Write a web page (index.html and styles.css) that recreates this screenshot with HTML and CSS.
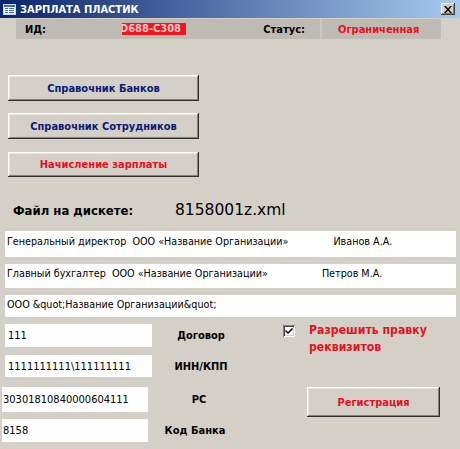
FILE: index.html
```html
<!DOCTYPE html>
<html lang="ru">
<head>
<meta charset="utf-8">
<title>ЗАРПЛАТА ПЛАСТИК</title>
<link rel="stylesheet" href="styles.css">
</head>
<body>
<div class="window">
  <div class="titlebar">
    <svg class="appicon" width="13" height="11" viewBox="0 0 13 11">
      <rect x="0.5" y="0.5" width="12" height="10" fill="#ffffff" stroke="#c8d4f0"/>
      <rect x="1" y="1" width="11" height="2" fill="#3a6ad0"/>
      <rect x="2" y="4" width="3" height="1" fill="#3a6ad0"/>
      <rect x="6" y="4" width="5" height="1" fill="#3a6ad0"/>
      <rect x="2" y="6" width="3" height="1" fill="#3a6ad0"/>
      <rect x="6" y="6" width="5" height="1" fill="#3a6ad0"/>
      <rect x="2" y="8" width="3" height="1" fill="#3a6ad0"/>
      <rect x="6" y="8" width="5" height="1" fill="#3a6ad0"/>
    </svg>
    <span class="title">ЗАРПЛАТА ПЛАСТИК</span>
    <span class="closebtn">
      <svg width="8" height="7" viewBox="0 0 8 7"><path d="M0 0h2l2 2.5L6 0h2L5 3.5 8 7H6L4 4.5 2 7H0l3-3.5z" fill="#000"/></svg>
    </span>
  </div>

  <div class="strip">
    <span class="cell-id">ИД:</span>
    <span class="cell-idval"><span>D688-C308</span></span>
    <span class="cell-status">Статус:</span>
    <span class="cell-sep"></span>
    <span class="cell-statusval">Ограниченная</span>
  </div>

  <div class="buttons">
    <div class="btn btn-navy btn-main">Справочник Банков</div>
    <div class="btn btn-navy btn-main">Справочник Сотрудников</div>
    <div class="btn btn-red btn-main">Начисление зарплаты</div>
  </div>

  <div class="filerow">
    <span class="filelabel">Файл на дискете:</span>
    <span class="filename">8158001z.xml</span>
  </div>

  <div class="field wide f1"><span class="w-left">Генеральный директор&nbsp; ООО «Название Организации»</span><span class="w-right r1">Иванов А.А.</span></div>
  <div class="field wide f2"><span class="w-left">Главный бухгалтер&nbsp; ООО «Название Организации»</span><span class="w-right r2">Петров М.А.</span></div>
  <div class="field wide f3">ООО &amp;quot;Название Организации&amp;quot;</div>

  <div class="lower">
    <div class="rows">
      <div class="row r-a"><div class="field small">111</div><span class="lbl">Договор</span></div>
      <div class="row r-b"><div class="field small">1111111111\111111111</div><span class="lbl">ИНН/КПП</span></div>
      <div class="row r-c"><div class="field small s2">30301810840000604111</div><span class="lbl lbl-rs">РС</span></div>
      <div class="row r-d"><div class="field small s2">8158</div><span class="lbl lbl-kod">Код Банка</span></div>
    </div>
    <div class="side">
      <div class="check">
        <span class="box"><svg width="8" height="7" viewBox="0 0 8 7"><path d="M0 3l1-1 2 2 4-4 1 1-5 5z" fill="#000"/></svg></span>
        <span class="checklabel">Разрешить правку реквизитов</span>
      </div>
      <div class="btn btn-red btn-reg">Регистрация</div>
    </div>
  </div>
</div>
</body>
</html>
```

FILE: styles.css
```css
html, body {
  margin: 0;
  padding: 0;
}
body {
  background: #d4d0c8;
  font-family: Tahoma, "DejaVu Sans Condensed", "Liberation Sans", sans-serif;
  font-size: 11px;
  color: #000;
}
.window {
  width: 460px;
  height: 449px;
  overflow: hidden;
}
.titlebar {
  height: 18px;
  display: flex;
  align-items: center;
  background: linear-gradient(to right, #0a246a, #a6caf0);
  color: #fff;
  position: relative;
}
.appicon {
  margin-left: 3px;
  flex: none;
}
.title {
  margin-left: 4px;
  font-weight: bold;
  font-size: 11px;
  font-family: "DejaVu Sans Condensed", "Liberation Sans", sans-serif;
  letter-spacing: 0;
}
.closebtn {
  margin-left: auto;
  margin-right: 5px;
  width: 14px;
  height: 12px;
  background: #d4d0c8;
  box-shadow: inset -1px -1px #404040, inset 1px 1px #ffffff, inset -2px -2px #808080;
  display: flex;
  align-items: center;
  justify-content: center;
}
.strip {
  margin: 1px 0 0 16px;
  width: 425px;
  height: 20px;
  background: #bebbb4;
  display: flex;
  align-items: center;
  font-weight: bold;
  font-family: "DejaVu Sans Condensed", "Liberation Sans", sans-serif;
}
.cell-id {
  width: 97px;
  padding-left: 9px;
}
.cell-idval {
  width: 64px;
  height: 12px;
  background: #f0141e;
  color: #ffc8c8;
  overflow: hidden;
  display: flex;
  align-items: center;
  line-height: 12px;
}
.cell-idval span {
  margin-left: -2px;
  white-space: nowrap;
}
.cell-status {
  width: 133px;
  text-align: right;
  padding-right: 15px;
  margin-left: 1px;
  box-sizing: border-box;
}
.cell-sep {
  width: 2px;
  height: 20px;
  background: #cdcac3;
}
.cell-statusval {
  margin-left: 16px;
  color: #e8101c;
}
.buttons {
  margin: 36px 0 0 8px;
  display: flex;
  flex-direction: column;
  gap: 12px;
}
.btn {
  box-sizing: border-box;
  background: #d4d0c8;
  box-shadow: inset -1px -1px #303030, inset 1px 1px #ffffff, inset -2px -2px #808080, inset 2px 2px #e8e6e0;
  display: flex;
  align-items: center;
  justify-content: center;
  font-weight: bold;
  font-family: "DejaVu Sans Condensed", "Liberation Sans", sans-serif;
  font-size: 11px;
}
.btn-main {
  width: 191px;
  height: 26px;
}
.btn-navy { color: #0a1a78; }
.btn-red { color: #e8101c; }
.buttons .btn:last-child { margin-top: 1px; height: 25px; }
.filerow {
  margin: 21px 0 0 13px;
  height: 24px;
  display: flex;
  align-items: center;
}
.filelabel {
  width: 162px;
  font-weight: bold;
  font-size: 13px;
  padding-top: 1px;
  font-family: "DejaVu Sans Condensed", "Liberation Sans", sans-serif;
}
.filename {
  font-size: 15.5px;
  font-family: "DejaVu Sans", "Liberation Sans", sans-serif;
}
.field {
  background: #ffffff;
  box-sizing: border-box;
  white-space: nowrap;
  overflow: hidden;
  font-family: "DejaVu Sans Condensed", "Liberation Sans", sans-serif;
  font-size: 10.7px;
  padding: 3px 0 0 2px;
}
.wide {
  margin-left: 5px;
  width: 451px;
  display: flex;
}
.f1 { margin-top: 9px; height: 26px; padding-top: 4px; }
.f2 { margin-top: 7px; height: 24px; padding-top: 3px; }
.f3 { margin-top: 7px; height: 22px; padding-top: 3px; }
.w-left { flex: none; }
.r1 { margin-left: 45px; }
.r2 { margin-left: 54px; }
.lower {
  display: flex;
  margin-top: 7px;
}
.rows {
  width: 240px;
  display: flex;
  flex-direction: column;
}
.row {
  display: flex;
  align-items: center;
}
.row .small {
  margin-left: 5px;
  width: 147px;
  height: 23px;
  padding-left: 3px;
  padding-top: 0;
  display: flex;
  align-items: center;
  font-size: 11px;
}
.row .s2 {
  margin-left: 2px;
  padding-left: 1px;
  width: 146px;
}
.r-b .small { height: 22px; }
.r-c .small { height: 25px; }
.r-b { margin-top: 8px; }
.r-c { margin-top: 10px; }
.r-d { margin-top: 7px; }
.lbl {
  flex: 1;
  text-align: center;
  font-weight: bold;
  font-family: "DejaVu Sans Condensed", "Liberation Sans", sans-serif;
  font-size: 11px;
  padding-left: 10px;
}
.lbl-kod { padding-left: 2px; }
.side {
  display: flex;
  flex-direction: column;
  padding-top: 0;
}
.check {
  margin-left: 43px;
  display: flex;
  align-items: flex-start;
}
.box {
  margin-top: 1px;
  width: 12px;
  height: 12px;
  box-sizing: border-box;
  background: #fff;
  box-shadow: inset 1px 1px #808080, inset -1px -1px #ffffff, inset 2px 2px #404040, inset -2px -2px #d4d0c8;
  display: flex;
  align-items: center;
  justify-content: center;
  flex: none;
}
.checklabel {
  margin-left: 14px;
  width: 130px;
  color: #e8101c;
  font-weight: bold;
  font-size: 12.2px;
  line-height: 17px;
  margin-top: -2px;
  font-family: "DejaVu Sans Condensed", "Liberation Sans", sans-serif;
}
.btn-reg {
  margin: 31px 0 0 67px;
  width: 133px;
  height: 30px;
}
```
